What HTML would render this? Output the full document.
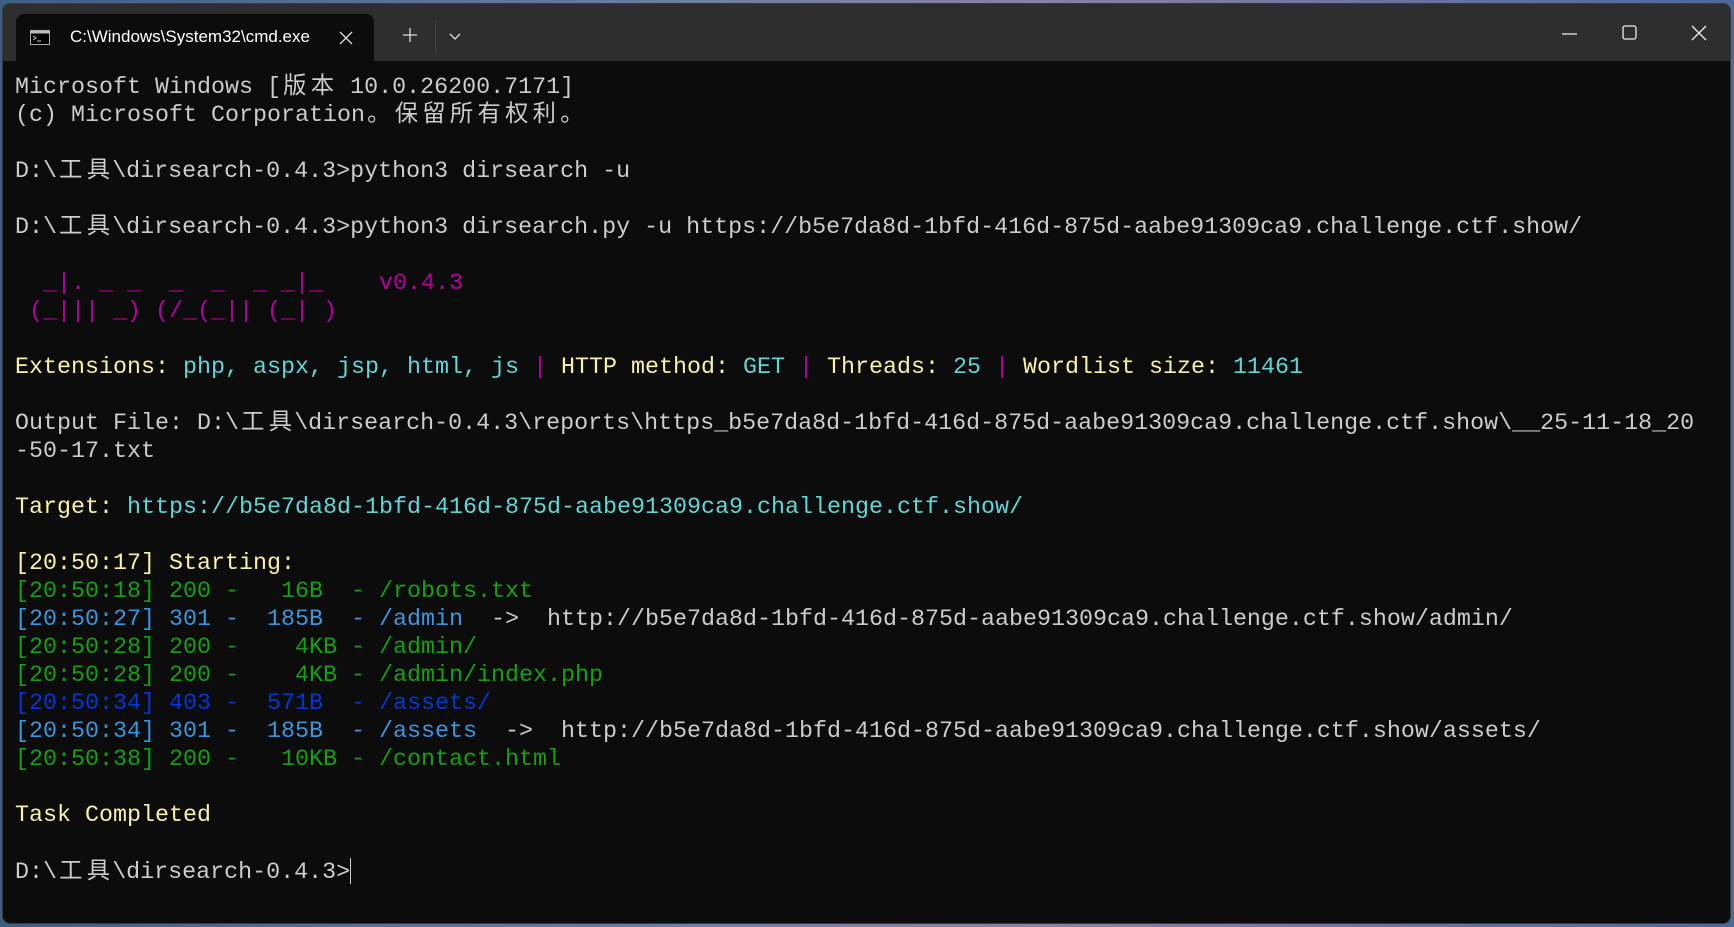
<!DOCTYPE html>
<html><head><meta charset="utf-8"><style>
html,body{margin:0;padding:0;width:1734px;height:927px;overflow:hidden;background:linear-gradient(90deg,#3d5f86,#6c7fa5 40%,#8a7fa8 60%,#4a6a9a);}
.win{position:absolute;left:2px;top:3px;width:1729px;height:921px;background:#0c0c0c;border-radius:8px;overflow:hidden;border:1px solid #3a3a3a;box-sizing:border-box}
.tb{position:absolute;left:0;top:0;right:0;height:57px;background:#2e2e2e}
.tab{position:absolute;left:13px;top:10px;width:358px;height:47px;background:#0c0c0c;border-radius:8px 8px 0 0}
.tt{position:absolute;left:54px;top:13px;width:240px;overflow:hidden;white-space:nowrap;color:#fff;font:17px "Liberation Sans",sans-serif}
pre{position:absolute;left:12px;top:70px;margin:0;font:23.33px/28px "Liberation Mono","Noto Sans CJK SC",monospace;color:#cccccc;white-space:pre}
.c{display:inline-block;width:27.6px;text-align:center}
.y{color:#f9f1a5}.k{color:#61d6d6}.m{color:#b4009e}.g{color:#13a10e}.b{color:#3a96dd}.d{color:#0037da}
svg{position:absolute}
</style></head><body>
<div class="win">
<div class="tb"></div>
<div class="tab">
<svg style="left:14px;top:16px" width="20" height="15" viewBox="0 0 20 15"><rect x="0.5" y="0.5" width="19" height="14" fill="#000" stroke="#aaa"/><rect x="0.5" y="0.5" width="19" height="3" fill="#bbb"/><path d="M3 6 L6 8 L3 10 M7 11 H11" stroke="#ccc" fill="none"/></svg>
<div class="tt">C:\Windows\System32\cmd.exe</div>
<svg style="left:323px;top:17px" width="14" height="14"><path d="M1 1L13 13M13 1L1 13" stroke="#ddd" stroke-width="1.3"/></svg>
</div>
<svg style="left:399px;top:23px" width="16" height="16"><path d="M8 1V15M1 8H15" stroke="#ddd" stroke-width="1.3"/></svg>
<div style="position:absolute;left:432px;top:16px;width:1px;height:33px;background:#444"></div>
<svg style="left:446px;top:29px" width="12" height="8"><path d="M1 1L6 6L11 1" stroke="#ddd" stroke-width="1.3" fill="none"/></svg>
<svg style="left:1559px;top:28px" width="16" height="4"><path d="M0 2H15" stroke="#eee" stroke-width="1.3"/></svg>
<svg style="left:1619px;top:21px" width="16" height="16"><rect x="1" y="1" width="13" height="13" rx="2" stroke="#eee" stroke-width="1.3" fill="none"/></svg>
<svg style="left:1688px;top:21px" width="16" height="16"><path d="M1 1L15 15M15 1L1 15" stroke="#eee" stroke-width="1.3"/></svg>
<pre>Microsoft Windows [<span class="c">版</span><span class="c">本</span> 10.0.26200.7171]
(c) Microsoft Corporation<span class="c">。</span><span class="c">保</span><span class="c">留</span><span class="c">所</span><span class="c">有</span><span class="c">权</span><span class="c">利</span><span class="c">。</span>

D:\<span class="c">工</span><span class="c">具</span>\dirsearch-0.4.3&gt;python3 dirsearch -u

D:\<span class="c">工</span><span class="c">具</span>\dirsearch-0.4.3&gt;python3 dirsearch.py -u https://b5e7da8d-1bfd-416d-875d-aabe91309ca9.challenge.ctf.show/

<span class="m">  _|. _ _  _  _  _ _|_    v0.4.3
 (_||| _) (/_(_|| (_| )</span>

<span class="y">Extensions: </span><span class="k">php, aspx, jsp, html, js</span><span class="m"> | </span><span class="y">HTTP method: </span><span class="k">GET</span><span class="m"> | </span><span class="y">Threads: </span><span class="k">25</span><span class="m"> | </span><span class="y">Wordlist size: </span><span class="k">11461</span>

Output File: D:\<span class="c">工</span><span class="c">具</span>\dirsearch-0.4.3\reports\https_b5e7da8d-1bfd-416d-875d-aabe91309ca9.challenge.ctf.show\__25-11-18_20
-50-17.txt

<span class="y">Target: </span><span class="k">https://b5e7da8d-1bfd-416d-875d-aabe91309ca9.challenge.ctf.show/</span>

<span class="y">[20:50:17] Starting:</span>
<span class="g">[20:50:18] 200 -   16B  - /robots.txt</span>
<span class="b">[20:50:27] 301 -  185B  - /admin</span>  -&gt;  http://b5e7da8d-1bfd-416d-875d-aabe91309ca9.challenge.ctf.show/admin/
<span class="g">[20:50:28] 200 -    4KB - /admin/</span>
<span class="g">[20:50:28] 200 -    4KB - /admin/index.php</span>
<span class="d">[20:50:34] 403 -  571B  - /assets/</span>
<span class="b">[20:50:34] 301 -  185B  - /assets</span>  -&gt;  http://b5e7da8d-1bfd-416d-875d-aabe91309ca9.challenge.ctf.show/assets/
<span class="g">[20:50:38] 200 -   10KB - /contact.html</span>

<span class="y">Task Completed</span>

D:\<span class="c">工</span><span class="c">具</span>\dirsearch-0.4.3&gt;<span style="display:inline-block;width:1px;height:26px;background:#ccc;vertical-align:-6px"></span></pre>
</div>
</body></html>
